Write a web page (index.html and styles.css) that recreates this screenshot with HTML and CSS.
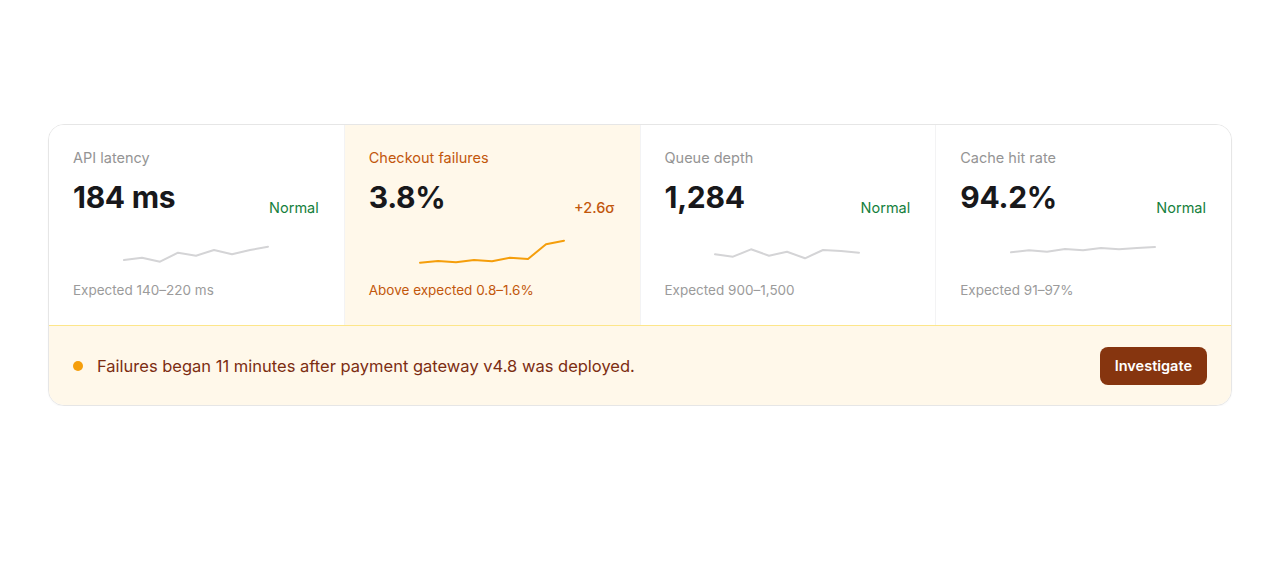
FILE: index.html
```html
<!DOCTYPE html>
<html lang="en">
<head>
  <meta charset="UTF-8">
  <title>Service health</title>
  <link rel="stylesheet" href="styles.css">
</head>
<body>

  <!-- metric tiles + incident note -->
  <section class="panel">
    <div class="metrics">

      <div class="metric">
        <div class="metric-label">API latency</div>
        <div class="metric-row">
          <span class="metric-value">184 ms</span>
          <span class="metric-status">Normal</span>
        </div>
        <svg class="spark" viewBox="0 0 144 28" width="144" height="28">
          <polyline points="0,24 18,21.7 36,25.7 54,16.7 72,19.7 90,14 108,18.3 126,14 144,10.7"/>
        </svg>
        <div class="metric-note">Expected 140–220 ms</div>
      </div>

      <div class="metric metric-alert">
        <div class="metric-label">Checkout failures</div>
        <div class="metric-row">
          <span class="metric-value">3.8%</span>
          <span class="metric-status">+2.6σ</span>
        </div>
        <svg class="spark" viewBox="0 0 144 28" width="144" height="28">
          <polyline points="0,26.7 18,25 36,26.3 54,24 72,25.3 90,21.7 108,23 126,8.3 144,4.7"/>
        </svg>
        <div class="metric-note">Above expected 0.8–1.6%</div>
      </div>

      <div class="metric">
        <div class="metric-label">Queue depth</div>
        <div class="metric-row">
          <span class="metric-value">1,284</span>
          <span class="metric-status">Normal</span>
        </div>
        <svg class="spark" viewBox="0 0 144 28" width="144" height="28">
          <polyline points="0,18.3 18,20.7 36,13.3 54,19.7 72,15.7 90,22.3 108,14 126,15 144,16.7"/>
        </svg>
        <div class="metric-note">Expected 900–1,500</div>
      </div>

      <div class="metric">
        <div class="metric-label">Cache hit rate</div>
        <div class="metric-row">
          <span class="metric-value">94.2%</span>
          <span class="metric-status">Normal</span>
        </div>
        <svg class="spark" viewBox="0 0 144 28" width="144" height="28">
          <polyline points="0,16.3 18,14.3 36,15.7 54,13 72,14.3 90,12 108,13.3 126,12 144,11"/>
        </svg>
        <div class="metric-note">Expected 91–97%</div>
      </div>

    </div>

    <div class="incident">
      <span class="incident-dot"></span>
      <p class="incident-text">Failures began 11 minutes after payment gateway v4.8 was deployed.</p>
      <button class="incident-btn">Investigate</button>
    </div>
  </section>

</body>
</html>
```

FILE: styles.css
```css
/* page */
body {
  margin: 0;
  padding: 124px 48px 0;
  background: #ffffff;
  font-family: Inter, "Liberation Sans", sans-serif;
  color: #1a1a1a;
}

/* outer card */
.panel {
  border: 1px solid #e6e6e6;
  border-radius: 16px;
  overflow: hidden;
  background: #ffffff;
  box-shadow: 0 1px 2px rgba(0, 0, 0, 0.03);
}

/* four tiles, thin dividers come from the gap */
.metrics {
  display: grid;
  grid-template-columns: repeat(4, 1fr);
  gap: 1px;
  background: #f3f3f4;
}

.metric {
  background: #ffffff;
  padding: 23px 25px 26px 24px;
  display: flex;
  flex-direction: column;
}

.metric-label {
  font-size: 14.5px;
  line-height: 20px;
  color: #949494;
}

.metric-row {
  display: flex;
  justify-content: space-between;
  align-items: flex-end;
  margin-top: 11px;
}

.metric-value {
  font-size: 30px;
  line-height: 36px;
  font-weight: 700;
  letter-spacing: -0.3px;
  color: #18181b;
}

.metric-status {
  font-size: 14.5px;
  line-height: 20px;
  margin-bottom: -3px;
  color: #15803d;
}

.spark {
  display: block;
  margin: 21px auto 0;
  overflow: visible;
}

.spark polyline {
  fill: none;
  stroke: #d4d4d6;
  stroke-width: 2;
  stroke-linejoin: round;
  stroke-linecap: round;
}

.metric-note {
  margin-top: 17px;
  font-size: 13.5px;
  line-height: 18px;
  color: #9b9b9b;
}

/* highlighted tile */
.metric-alert {
  background: #fff8ea;
}

.metric-alert .metric-label,
.metric-alert .metric-note {
  color: #c2570c;
}

.metric-alert .metric-status {
  color: #c2570c;
  font-weight: 500;
}

.metric-alert .spark polyline {
  stroke: #f59e0b;
}

/* incident strip */
.incident {
  display: flex;
  align-items: center;
  gap: 14px;
  height: 79px;
  padding: 0 24px 0 24px;
  background: #fff8ea;
  border-top: 1px solid #fde68a;
}

.incident-dot {
  width: 10px;
  height: 10px;
  border-radius: 50%;
  background: #f59e0b;
}

.incident-text {
  flex: 1;
  margin: 0;
  font-size: 16.5px;
  color: #7c2d12;
}

.incident-btn {
  height: 38px;
  padding: 0 15px;
  border: none;
  border-radius: 8px;
  background: #86350f;
  color: #ffffff;
  font-family: inherit;
  font-size: 14.5px;
  font-weight: 600;
  cursor: pointer;
}
```
